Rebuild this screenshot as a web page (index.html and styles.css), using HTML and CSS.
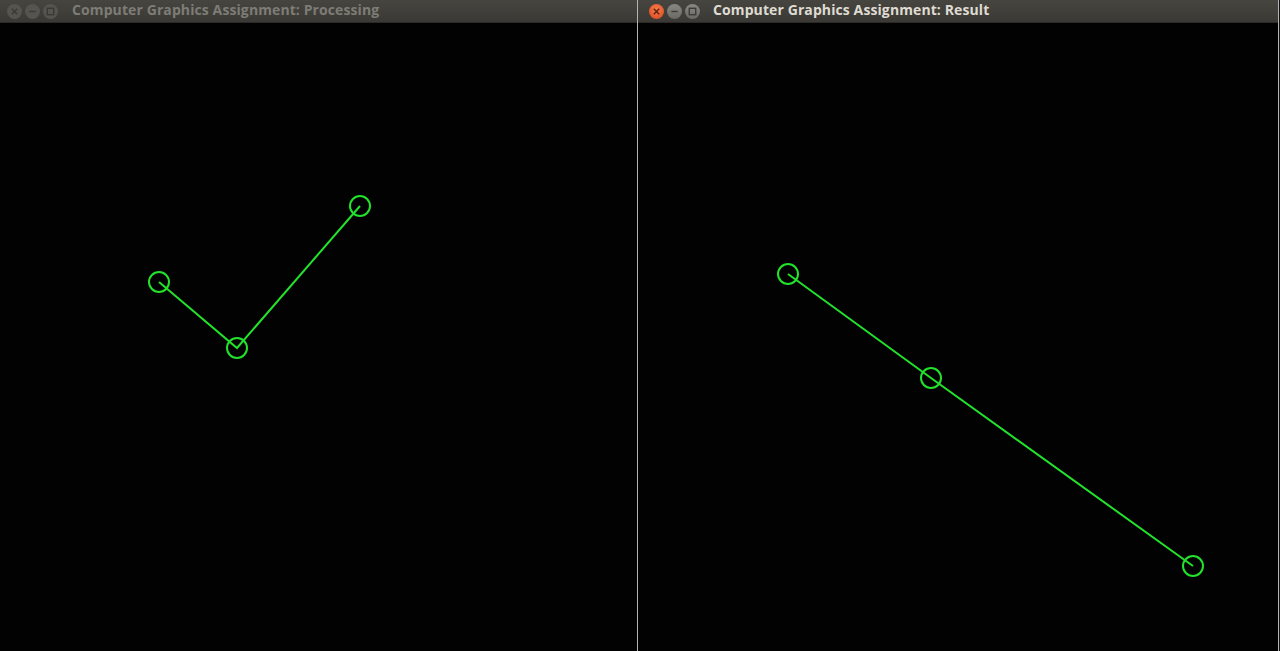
FILE: index.html
```html
<!DOCTYPE html>
<html>
<head>
<meta charset="utf-8">
<link rel="stylesheet" href="styles.css">
</head>
<body>
<div class="desk">
  <div class="win win-left">
    <div class="titlebar">
      <div class="btns">
        <span class="btn inactive"><svg viewBox="0 0 14 14"><path d="M4.5 4.5l5 5M9.5 4.5l-5 5"/></svg></span>
        <span class="btn inactive"><svg viewBox="0 0 14 14"><path d="M4 7h6"/></svg></span>
        <span class="btn inactive"><svg viewBox="0 0 14 14"><rect x="4" y="4" width="6" height="6"/></svg></span>
      </div>
      <div class="title dim">Computer Graphics Assignment: Processing</div>
    </div>
    <svg class="canvas" viewBox="0 23 637 628" width="637" height="628">
      <polyline points="159,282 237,348 360,206" class="ln"/>
      <circle cx="159" cy="282" r="10" class="pt"/>
      <circle cx="237" cy="348" r="10" class="pt"/>
      <circle cx="360" cy="206" r="10" class="pt"/>
    </svg>
  </div>
  <div class="win win-right">
    <div class="titlebar">
      <div class="btns">
        <span class="btn close"><svg viewBox="0 0 14 14"><path d="M4.5 4.5l5 5M9.5 4.5l-5 5"/></svg></span>
        <span class="btn active"><svg viewBox="0 0 14 14"><path d="M4 7h6"/></svg></span>
        <span class="btn active"><svg viewBox="0 0 14 14"><rect x="4" y="4" width="6" height="6"/></svg></span>
      </div>
      <div class="title">Computer Graphics Assignment: Result</div>
    </div>
    <svg class="canvas" viewBox="638 23 640 628" width="640" height="628">
      <polyline points="788,274 931,378 1193,566" class="ln"/>
      <circle cx="788" cy="274" r="10" class="pt"/>
      <circle cx="931" cy="378" r="10" class="pt"/>
      <circle cx="1193" cy="566" r="10" class="pt"/>
    </svg>
  </div>
  <div class="edge"></div>
</div>
</body>
</html>
```
FILE: styles.css
```css
html, body {
  margin: 0;
  padding: 0;
  background: #000;
  overflow: hidden;
}
.desk {
  display: flex;
  width: 1280px;
  height: 651px;
}
.win {
  display: flex;
  flex-direction: column;
  background: #020202;
}
.win-left {
  width: 637px;
}
.win-right {
  width: 640px;
  border-left: 1px solid #b4b4b4;
  border-right: 1px solid #b4b4b4;
}
.edge {
  width: 1px;
  background: #111;
}
.titlebar {
  height: 23px;
  flex: 0 0 23px;
  display: flex;
  align-items: center;
  background: linear-gradient(#46453f, #3a3935);
  box-sizing: border-box;
  border-bottom: 1px solid #2b2a27;
}
.btns {
  display: flex;
  gap: 3px;
  padding-left: 7px;
}
.win-right .btns {
  padding-left: 11px;
}
.btn {
  width: 15px;
  height: 15px;
  border-radius: 50%;
  display: flex;
}
.btn svg {
  width: 15px;
  height: 15px;
  fill: none;
  stroke-width: 1.3;
}
.btn.inactive {
  background: #55544f;
}
.btn.inactive svg {
  stroke: #3a3935;
}
.btn.active {
  background: linear-gradient(#8a8882, #6a6964);
}
.btn.active svg {
  stroke: #3c3b37;
}
.btn.close {
  background: radial-gradient(circle at 50% 35%, #f77a4a, #d9461e);
}
.btn.close svg {
  stroke: #5a2010;
}
.title {
  margin-left: 14px;
  padding-bottom: 3px;
  font-family: "Open Sans", "DejaVu Sans", sans-serif;
  font-weight: bold;
  font-size: 14px;
  color: #dfdbd2;
  white-space: nowrap;
  letter-spacing: 0.1px;
}
.win-right .title {
  margin-left: 13px;
}
.title.dim {
  color: #7e7c76;
}
.canvas {
  display: block;
  background: #020202;
}
.ln {
  fill: none;
  stroke: #22e22b;
  stroke-width: 2;
}
.pt {
  fill: none;
  stroke: #22e22b;
  stroke-width: 2;
}
```
